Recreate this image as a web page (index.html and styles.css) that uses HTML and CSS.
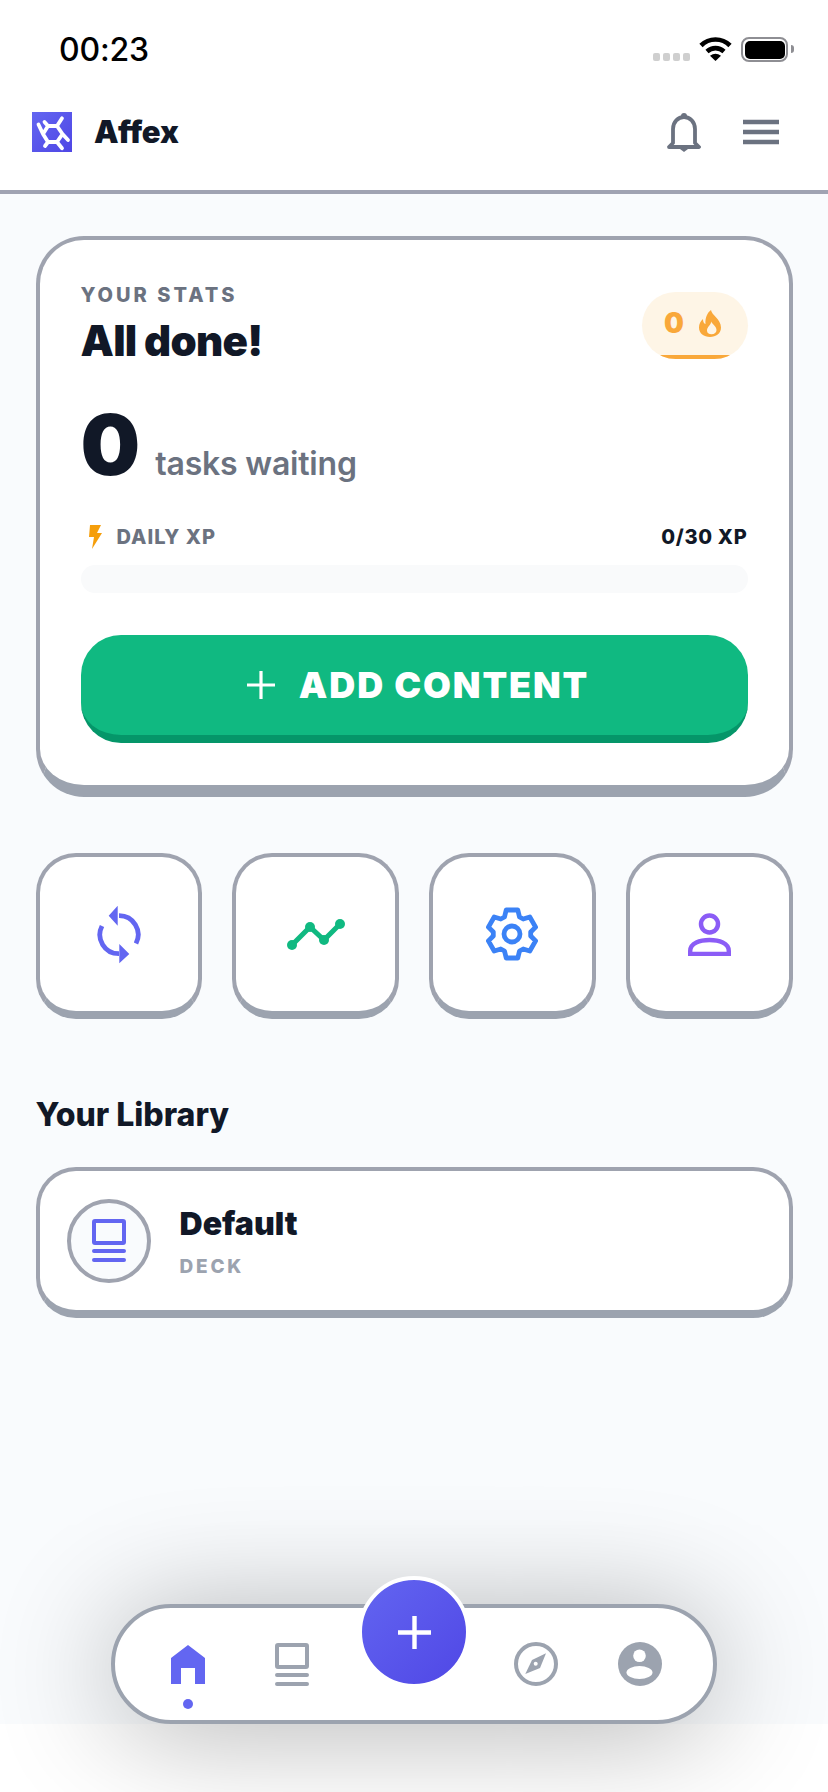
FILE: index.html
```html
<!DOCTYPE html>
<html lang="en">
<head>
<meta charset="utf-8">
<title>Affex</title>
<link rel="stylesheet" href="styles.css">
</head>
<body>
<div class="app">
  <div class="status">
    <span class="time">00:23</span>
    <div class="status-right">
      <div class="signal"><i></i><i></i><i></i><i></i></div>
      <svg class="wifi" width="33" height="24" viewBox="0 0 33 24"><path d="M2 8.5C10 .5 23 .5 31 8.5M8 14.5C13 10 20 10 25 14.5" fill="none" stroke="#000" stroke-width="4.6"/><path d="M11 18.8Q16.5 14.8 22 18.8L16.5 24Z" fill="#000"/></svg>
      <div class="battery"><div class="battery-fill"></div></div>
      <div class="battery-nub"></div>
    </div>
  </div>
  <header class="header">
    <div class="brand">
      <svg class="logo" width="40" height="40" viewBox="0 0 40 40"><defs><linearGradient id="lg" x1="0" y1="0" x2="1" y2="1"><stop offset="0" stop-color="#6366f1"/><stop offset="1" stop-color="#4f46e5"/></linearGradient></defs><rect width="40" height="40" fill="url(#lg)"/><path d="M16 14H25L30.500 22 25 30H16L11 22ZM25 14 30 6.300M11 22 6.500 12.500M16 14 12.500 10M16 30 13 34M30.500 22 36 28M25 30 30 36.300" fill="none" stroke="#fff" stroke-width="3.800" stroke-linecap="round" stroke-linejoin="round"/></svg>
      <span class="brand-name">Affex</span>
    </div>
    <div class="header-actions">
      <svg width="34" height="39" viewBox="0 0 34 39"><circle cx="17" cy="3" r="3" fill="#6b7280"/><path d="M6 30V16C6 9 11 4 17 4S28 9 28 16V30L32 34H2Z" fill="none" stroke="#6b7280" stroke-width="3.800" stroke-linejoin="round"/><path d="M13 36H21L17 39Z" fill="#6b7280"/></svg>
      <svg width="36" height="26" viewBox="0 0 36 26"><path d="M0 3H36M0 13H36M0 23H36" stroke="#6b7280" stroke-width="4.400"/></svg>
    </div>
  </header>
  <main class="main">
    <section class="card">
      <div class="card-top">
        <div>
          <div class="eyebrow">YOUR STATS</div>
          <h1 class="title">All done!</h1>
        </div>
        <div class="streak">
          <span class="streak-num">0</span>
          <svg width="22" height="27" viewBox="0 0 22 27"><path fill-rule="evenodd" d="M12 0C12.500 5 22 9 22 17.500 22 23.500 17 27 11 27S0 23.500 0 17.500C0 14 1.500 11 4 9 4 12 5 13.500 6.500 14 6 8 8 3 12 0ZM12 11.500C12.500 15 8 16.500 8 20.500 8 23 9.800 24.300 12.500 24.300 15.500 24.300 17.500 22.300 17.500 20 17.500 16.500 13.500 14.500 12 11.500Z" fill="#f9a83a"/></svg>
        </div>
      </div>
      <div class="count-row">
        <span class="count">0</span>
        <span class="count-label">tasks waiting</span>
      </div>
      <div class="xp-row">
        <div class="xp-left">
          <svg width="14" height="24" viewBox="0 0 14 24"><path d="M2 0H13L9 8H14L4 24 6 12H1Z" fill="#f59e0b"/></svg>
          <span class="xp-label">DAILY XP</span>
        </div>
        <span class="xp-value">0/30 XP</span>
      </div>
      <div class="progress"></div>
      <button class="add-btn">
        <svg width="28" height="28" viewBox="0 0 28 28"><path d="M14 0V28M0 14H28" stroke="#fff" stroke-width="3.200"/></svg>
        <span>ADD CONTENT</span>
      </button>
    </section>

    <section class="quick">
      <div class="quick-btn">
        <svg width="45" height="60" viewBox="0 0 45 60"><path d="M23 11.700A19 19 0 0 1 40 39.500M6 22A19 19 0 0 0 23 49.700" fill="none" stroke="#6366f1" stroke-width="4.800"/><path d="M12.700 11.700 21.700 1.700V21.700ZM33.300 50 23.300 40V59.300Z" fill="#6366f1"/></svg>
      </div>
      <div class="quick-btn">
        <svg width="58" height="31" viewBox="0 0 58 31"><path d="M5 26 23 8 37 21 53 5" fill="none" stroke="#10b981" stroke-width="5"/><g fill="#10b981"><circle cx="5" cy="26" r="5"/><circle cx="23" cy="8" r="5"/><circle cx="37" cy="21" r="5"/><circle cx="53" cy="5" r="5"/></g></svg>
      </div>
      <div class="quick-btn">
        <svg width="52" height="54" viewBox="0 0 52 54"><path d="M20.200 3H31.800L33.500 10 37.200 12 43.800 10 49.600 20.100 44.700 25V29L49.600 33.900 43.800 44 37.200 42 33.500 44 31.800 51H20.200L18.500 44 14.800 42 8.200 44 2.400 33.900 7.300 29V25L2.400 20.100 8.200 10 14.800 12 18.500 10Z" fill="none" stroke="#3b82f6" stroke-width="4.800" stroke-linejoin="round"/><circle cx="26" cy="27" r="8" fill="none" stroke="#3b82f6" stroke-width="4.800"/></svg>
      </div>
      <div class="quick-btn">
        <svg width="43" height="43" viewBox="0 0 43 43"><circle cx="21.500" cy="11" r="8.500" fill="none" stroke="#8b5cf6" stroke-width="4.500"/><path d="M2.200 41V38C2.200 30 12 27 21.500 27S40.800 30 40.800 38V41Z" fill="none" stroke="#8b5cf6" stroke-width="4.400"/></svg>
      </div>
    </section>

    <h2 class="section-title">Your Library</h2>
    <section class="deck">
      <div class="deck-icon">
        <svg width="34" height="43" viewBox="0 0 34 43"><rect x="2" y="2" width="30" height="22" rx="1" fill="none" stroke="#6366f1" stroke-width="4"/><path d="M2 32H32M2 41H32" stroke="#6366f1" stroke-width="4" stroke-linecap="round"/></svg>
      </div>
      <div class="deck-text">
        <div class="deck-name">Default</div>
        <div class="deck-kind">DECK</div>
      </div>
    </section>
  </main>
  <div class="home-area"></div>

  <nav class="nav">
    <div class="nav-item">
      <svg width="34" height="39" viewBox="0 0 34 39"><path d="M17 0 34 13V39H24V23H10V39H0V13Z" fill="#6366f1"/></svg>
      <span class="nav-dot"></span>
    </div>
    <div class="nav-item">
      <svg width="34" height="43" viewBox="0 0 34 43"><rect x="2" y="2" width="30" height="22" rx="1" fill="none" stroke="#9ca3af" stroke-width="4"/><path d="M2 32H32M2 41H32" stroke="#9ca3af" stroke-width="4" stroke-linecap="round"/></svg>
    </div>
    <div class="nav-gap"></div>
    <div class="nav-item">
      <svg width="44" height="44" viewBox="0 0 44 44"><circle cx="22" cy="22" r="20" fill="none" stroke="#9ca3af" stroke-width="4"/><path d="M32 11.300 26 26 11.300 32 18 18Z" fill="#9ca3af"/><circle cx="21.700" cy="21.700" r="2" fill="#fff"/></svg>
    </div>
    <div class="nav-item">
      <svg width="44" height="44" viewBox="0 0 44 44"><circle cx="22" cy="22" r="22" fill="#9ca3af"/><circle cx="21.500" cy="13.700" r="6.300" fill="#fff"/><ellipse cx="21.500" cy="30.500" rx="13" ry="6.500" fill="#fff"/></svg>
    </div>
    <button class="fab">
      <svg width="33" height="33" viewBox="0 0 33 33"><path d="M16.500 0V33M0 16.500H33" stroke="#fff" stroke-width="4.400"/></svg>
    </button>
  </nav>
</div>
</body>
</html>
```

FILE: styles.css
```css
* { box-sizing: border-box; }
html, body { margin: 0; padding: 0; background: #fff; }
body { font-family: Inter, "Liberation Sans", sans-serif; color: #111827; }
svg { display: block; flex: none; }

.app { position: relative; width: 828px; height: 1792px; display: flex; flex-direction: column; overflow: hidden; background: #fff; }

.status { height: 74px; padding: 37px 34px 0 59px; display: flex; justify-content: space-between; align-items: flex-start; flex: none; }
.time { font-size: 32px; line-height: 26px; font-weight: 500; letter-spacing: -0.2px; color: #000; }
.status-right { display: flex; align-items: flex-start; }
.signal { display: flex; gap: 2.5px; margin: 16px 9px 0 0; }
.signal i { width: 7.5px; height: 8px; border-radius: 2px; background: #cfcfcf; }
.wifi { margin-right: 9px; }
.battery { width: 47px; height: 25px; border: 2.5px solid #8e8e93; border-radius: 8px; padding: 1.5px; }
.battery-fill { width: 100%; height: 100%; background: #000; border-radius: 5px; }
.battery-nub { width: 3px; height: 8px; margin: 8px 0 0 3px; background: #8e8e93; border-radius: 0 3px 3px 0; }

.header { height: 120px; flex: none; padding: 0 49px 0 32px; display: flex; justify-content: space-between; align-items: center; background: #fff; border-bottom: 4px solid #a0a3b2; }
.brand { display: flex; align-items: center; gap: 22px; }
.brand-name { font-size: 31px; font-weight: 900; letter-spacing: -0.2px; line-height: 40px; color: #111827; }
.header-actions { display: flex; align-items: center; gap: 42px; }

.main { flex: 1; background: #f9fbfd; padding: 42px 35.5px 0; }

.card { background: #fff; border: 4px solid #9fa3af; border-bottom: 12px solid #9ca3af; border-radius: 48px; padding: 43px 41px 42px; }
.card-top { display: flex; justify-content: space-between; align-items: flex-start; }
.eyebrow { font-size: 20px; line-height: 24px; font-weight: 800; letter-spacing: 3px; color: #6b7280; }
.title { margin: 10px 0 0; font-size: 42px; line-height: 48px; font-weight: 900; letter-spacing: -0.75px; color: #111827; }
.streak { position: relative; overflow: hidden; margin-top: 9px; width: 106px; height: 67px; border-radius: 34px; background: #fef5e6; display: flex; align-items: center; justify-content: center; gap: 15px; padding: 0 4px 5px 0; }
.streak::after { content: ""; position: absolute; left: 0; right: 0; bottom: 0; height: 4.5px; background: #f9a83a; }
.streak-num { font-size: 28px; line-height: 30px; font-weight: 900; color: #f9a83a; }

.count-row { margin-top: 38px; display: flex; align-items: baseline; gap: 15px; }
.count { font-size: 84px; line-height: 84px; font-weight: 900; color: #111827; }
.count-label { font-size: 32px; font-weight: 600; letter-spacing: -0.2px; color: #6b7280; }

.xp-row { margin-top: 38px; height: 24px; display: flex; justify-content: space-between; align-items: center; }
.xp-left { display: flex; align-items: center; gap: 15px; padding-left: 7px; }
.xp-label { font-size: 20px; font-weight: 800; letter-spacing: 1px; color: #6b7280; }
.xp-value { font-size: 20px; font-weight: 800; letter-spacing: 0.7px; color: #111827; }
.progress { margin-top: 16px; height: 28px; border-radius: 14px; background: #f9fafb; }

.add-btn { margin-top: 42px; width: 100%; height: 108px; border: 0; border-bottom: 8px solid #059669; border-radius: 40px; background: #10b981; display: flex; align-items: center; justify-content: center; gap: 24px; font-family: inherit; font-size: 36px; font-weight: 900; letter-spacing: 1.9px; color: #fff; padding: 0 0 0 8px; }

.quick { margin-top: 56px; display: grid; grid-template-columns: repeat(4, 1fr); gap: 30px; }
.quick-btn { height: 166px; background: #fff; border: 4px solid #9fa3af; border-bottom: 8px solid #9ca3af; border-radius: 40px; display: flex; align-items: center; justify-content: center; }

.section-title { margin: 76px 0 0; font-size: 32px; line-height: 40px; font-weight: 800; color: #111827; }

.deck { margin-top: 32px; height: 151px; background: #fff; border: 4px solid #9fa3af; border-bottom: 8px solid #9ca3af; border-radius: 40px; padding: 0 27px; display: flex; align-items: center; gap: 29px; }
.deck-icon { width: 84px; height: 84px; border-radius: 50%; border: 4px solid #9fa3af; background: #f9fbfd; display: flex; align-items: center; justify-content: center; }
.deck-name { font-size: 32px; line-height: 40px; font-weight: 900; color: #111827; }
.deck-kind { margin-top: 12px; font-size: 19px; line-height: 22px; font-weight: 800; letter-spacing: 2.8px; color: #9ca3af; }

.home-area { height: 68px; flex: none; background: #fff; }

.nav { position: absolute; left: 111px; top: 1604px; width: 606px; height: 120px; background: #fff; border: 4px solid #9ca3af; border-radius: 60px; padding: 34px 21px 0; display: flex; align-items: flex-start; box-shadow: 0 8px 120px rgba(0, 0, 0, 0.3); }
.nav-item { position: relative; width: 104px; height: 44px; display: flex; align-items: center; justify-content: center; }
.nav-gap { width: 140px; }
.nav-dot { position: absolute; left: 47px; top: 57px; width: 10px; height: 10px; border-radius: 50%; background: #6366f1; }
.fab { position: absolute; left: 243px; top: -32px; width: 112px; height: 112px; padding: 0; border: 4px solid #fff; border-radius: 50%; background: linear-gradient(135deg, #6366f1, #4f46e5); background-origin: border-box; display: flex; align-items: center; justify-content: center; }
```
